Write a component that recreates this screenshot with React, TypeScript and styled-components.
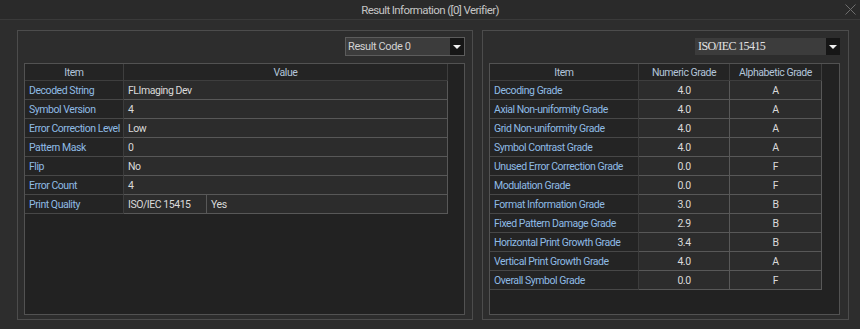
import { Fragment } from "react";
import styled, { createGlobalStyle } from "styled-components";

const GlobalStyle = createGlobalStyle`
  html, body {
    margin: 0;
    padding: 0;
    background: #2d2d2d;
  }
  * {
    box-sizing: border-box;
  }
`;

const FONT = `"Roboto", "Liberation Sans", sans-serif`;

const Window = styled.div`
  width: 860px;
  height: 329px;
  background: #2d2d2d;
  display: flex;
  flex-direction: column;
  font-family: ${FONT};
  overflow: hidden;
`;

const TitleBar = styled.div`
  height: 20px;
  display: grid;
  grid-template-columns: 1fr auto 1fr;
  align-items: center;
  background: #2a2a2a;
  border-bottom: 1px solid #3a3a3a;
  color: #c4c4c4;
  font-size: 11.5px;
  letter-spacing: -0.6px;
`;

const CloseButton = styled.div`
  justify-self: end;
  width: 14px;
  height: 14px;
  margin-right: 3px;
  display: flex;
  align-items: center;
  justify-content: center;
`;

const Body = styled.div`
  display: flex;
  gap: 9px;
  padding: 10px 0 0 17px;
`;

const GroupBox = styled.div<{ $width: number; $padL: number; $padR: number }>`
  width: ${(p) => p.$width}px;
  height: 290px;
  border: 1px solid #4c4c4c;
  padding: 6px ${(p) => p.$padR}px 4px ${(p) => p.$padL}px;
  display: flex;
  flex-direction: column;
  gap: 7px;
`;

const ComboRow = styled.div`
  display: flex;
  justify-content: flex-end;
  height: 19px;
`;

const Combo = styled.div<{ $width: number; $bordered?: boolean }>`
  width: ${(p) => p.$width}px;
  height: ${(p) => (p.$bordered ? 19 : 17)}px;
  margin-top: ${(p) => (p.$bordered ? 0 : 1)}px;
  display: flex;
  background: #3c3c3c;
  border: ${(p) => (p.$bordered ? "1px solid #5c5c5c" : "none")};
`;

const ComboText = styled.div<{ $serif?: boolean }>`
  flex: 1;
  display: flex;
  align-items: center;
  padding-left: ${(p) => (p.$serif ? 3 : 2)}px;
  color: ${(p) => (p.$serif ? "#e2e2e2" : "#d2d2d2")};
  font-family: ${(p) => (p.$serif ? `"Liberation Serif", serif` : FONT)};
  font-size: ${(p) => (p.$serif ? 12 : 11)}px;
  letter-spacing: ${(p) => (p.$serif ? -0.6 : -0.4)}px;
`;

const ComboButton = styled.div`
  width: 14px;
  background: #161616;
  display: flex;
  align-items: center;
  justify-content: center;
`;

const Arrow = styled.div`
  width: 0;
  height: 0;
  border-left: 4px solid transparent;
  border-right: 4px solid transparent;
  border-top: 4px solid #f0f0f0;
`;

const Panel = styled.div`
  flex: 1;
  background: #222222;
  border: 1px solid #525252;
  display: flex;
  align-items: flex-start;
`;

const Grid = styled.div<{ $cols: string }>`
  display: grid;
  grid-template-columns: ${(p) => p.$cols};
  font-size: 10.5px;
  letter-spacing: -0.45px;
`;

const HeadCell = styled.div<{ $span?: number }>`
  grid-column: span ${(p) => p.$span ?? 1};
  height: 17px;
  display: flex;
  align-items: center;
  justify-content: center;
  background: #242424;
  color: #b3c5da;
  border-right: 1px solid #3e3e3e;
  border-bottom: 1px solid #3e3e3e;
`;

const ItemCell = styled.div`
  height: 19px;
  display: flex;
  align-items: center;
  padding-left: 4px;
  background: #242424;
  color: #8fbbe5;
  border-right: 1px solid #3c3c3c;
  border-bottom: 1px solid #474747;
  white-space: nowrap;
  overflow: hidden;
`;

const ValueCell = styled.div<{ $span?: number; $center?: boolean }>`
  grid-column: span ${(p) => p.$span ?? 1};
  height: 19px;
  display: flex;
  align-items: center;
  justify-content: ${(p) => (p.$center ? "center" : "flex-start")};
  padding-left: ${(p) => (p.$center ? 0 : 4)}px;
  background: #2c2c2c;
  color: #dadada;
  border-right: 1px solid #585858;
  border-bottom: 1px solid #585858;
  white-space: nowrap;
  overflow: hidden;
`;

const resultRows: [string, string][] = [
  ["Decoded String", "FLImaging Dev"],
  ["Symbol Version", "4"],
  ["Error Correction Level", "Low"],
  ["Pattern Mask", "0"],
  ["Flip", "No"],
  ["Error Count", "4"],
];

const gradeRows: [string, string, string][] = [
  ["Decoding Grade", "4.0", "A"],
  ["Axial Non-uniformity Grade", "4.0", "A"],
  ["Grid Non-uniformity Grade", "4.0", "A"],
  ["Symbol Contrast Grade", "4.0", "A"],
  ["Unused Error Correction Grade", "0.0", "F"],
  ["Modulation Grade", "0.0", "F"],
  ["Format Information Grade", "3.0", "B"],
  ["Fixed Pattern Damage Grade", "2.9", "B"],
  ["Horizontal Print Growth Grade", "3.4", "B"],
  ["Vertical Print Growth Grade", "4.0", "A"],
  ["Overall Symbol Grade", "0.0", "F"],
];

function ComboBox({ text, width, bordered }: { text: string; width: number; bordered?: boolean }) {
  return (
    <Combo $width={width} $bordered={bordered}>
      <ComboText $serif={!bordered}>{text}</ComboText>
      <ComboButton>
        <Arrow />
      </ComboButton>
    </Combo>
  );
}

export default function App() {
  return (
    <>
      <GlobalStyle />
      <Window>
        <TitleBar>
          <span />
          <span>Result Information ([0] Verifier)</span>
          <CloseButton>
            <svg width="11" height="11" viewBox="0 0 11 11">
              <path d="M0.5 0.5 L10.5 10.5 M10.5 0.5 L0.5 10.5" stroke="#6e6e6e" strokeWidth="1" />
            </svg>
          </CloseButton>
        </TitleBar>
        <Body>
          <GroupBox $width={456} $padL={6} $padR={7}>
            <ComboRow>
              <ComboBox text="Result Code 0" width={120} bordered />
            </ComboRow>
            <Panel>
              <Grid $cols="99px 83px 241px">
                <HeadCell>Item</HeadCell>
                <HeadCell $span={2}>Value</HeadCell>
                {resultRows.map(([item, value]) => (
                  <Fragment key={item}>
                    <ItemCell>{item}</ItemCell>
                    <ValueCell $span={2}>{value}</ValueCell>
                  </Fragment>
                ))}
                <ItemCell>Print Quality</ItemCell>
                <ValueCell>ISO/IEC 15415</ValueCell>
                <ValueCell>Yes</ValueCell>
              </Grid>
            </Panel>
          </GroupBox>
          <GroupBox $width={367} $padL={6} $padR={8}>
            <ComboRow>
              <ComboBox text="ISO/IEC 15415" width={145} />
            </ComboRow>
            <Panel>
              <Grid $cols="149px 91px 92px">
                <HeadCell>Item</HeadCell>
                <HeadCell>Numeric Grade</HeadCell>
                <HeadCell>Alphabetic Grade</HeadCell>
                {gradeRows.map(([item, num, alpha]) => (
                  <Fragment key={item}>
                    <ItemCell>{item}</ItemCell>
                    <ValueCell $center>{num}</ValueCell>
                    <ValueCell $center>{alpha}</ValueCell>
                  </Fragment>
                ))}
              </Grid>
            </Panel>
          </GroupBox>
        </Body>
      </Window>
    </>
  );
}
